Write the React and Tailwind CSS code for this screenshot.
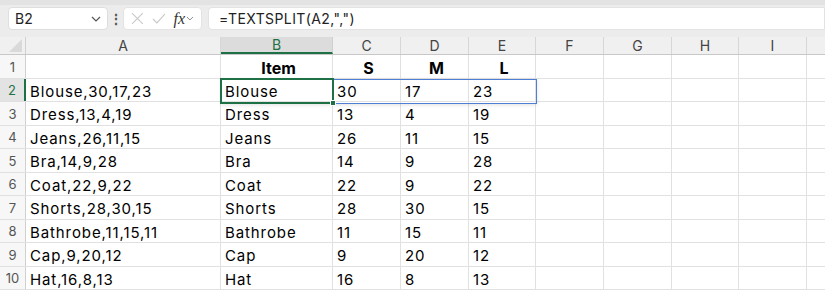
const cols = [
  { id: 'A', w: 'w-[195px]' },
  { id: 'B', w: 'w-[112px]' },
  { id: 'C', w: 'w-[68px]' },
  { id: 'D', w: 'w-[68px]' },
  { id: 'E', w: 'w-[67px]' },
  { id: 'F', w: 'w-[68px]' },
  { id: 'G', w: 'w-[68px]' },
  { id: 'H', w: 'w-[67px]' },
  { id: 'I', w: 'w-[68px]' },
  { id: '', w: 'w-[68px]' },
]

const raw = [
  ['Blouse', 30, 17, 23],
  ['Dress', 13, 4, 19],
  ['Jeans', 26, 11, 15],
  ['Bra', 14, 9, 28],
  ['Coat', 22, 9, 22],
  ['Shorts', 28, 30, 15],
  ['Bathrobe', 11, 15, 11],
  ['Cap', 9, 20, 12],
  ['Hat', 16, 8, 13],
]

const rows = [
  ['', 'Item', 'S', 'M', 'L'],
  ...raw.map((r) => [r.join(','), r[0], String(r[1]), String(r[2]), String(r[3])]),
]

function Cell({ col, value, header, ci }) {
  const align = header && ci > 0 ? 'justify-center font-bold text-[16px]' : 'justify-start text-[15px] tracking-[0.9px]'
  return (
    <div
      className={`${col.w} shrink-0 h-full flex items-center pt-[4px] pl-[4px] border-r border-[#e1e1e1] text-black ${align}`}
    >
      {value}
    </div>
  )
}

export default function App() {
  return (
    <div className="w-[825px] h-[292px] overflow-hidden bg-white font-['Inter',sans-serif]">
      {/* formula bar */}
      <div className="h-[37px] bg-[#ececec] flex items-start pt-[2px] border-t-[5px] border-[#e3e3e3]">
        <div className="ml-[8px] w-[100px] h-[23px] rounded-[4px] bg-white border border-[#dedede] flex items-center justify-between px-[6px]">
          <span className="text-[14px] text-[#222]">B2</span>
          <svg width="10" height="6" viewBox="0 0 10 6" fill="none" stroke="#555" strokeWidth="1.2">
            <path d="M1 1l4 4 4-4" />
          </svg>
        </div>
        <div className="w-[15px] h-[23px] flex items-center justify-center text-[#555] text-[14px] font-bold">⋮</div>
        <div className="w-[79px] h-[23px] rounded-[4px] bg-white border border-[#e3e3e3] flex items-center px-[7px] gap-[8px]">
          <svg width="13" height="13" viewBox="0 0 13 13" stroke="#c8c8c8" strokeWidth="1.1">
            <path d="M1 1l11 11M12 1L1 12" />
          </svg>
          <svg width="14" height="11" viewBox="0 0 14 11" fill="none" stroke="#c8c8c8" strokeWidth="1.1">
            <path d="M1 6l4 4 8-9" />
          </svg>
          <span className="font-['Liberation_Serif',serif] italic text-[16px] text-[#333] leading-none">fx</span>
          <svg width="8" height="5" viewBox="0 0 8 5" fill="none" stroke="#888" strokeWidth="1" className="-ml-[7px]">
            <path d="M1 1l3 3 3-3" />
          </svg>
        </div>
        <div className="ml-[6px] flex-1 h-[23px] bg-white border border-[#e3e3e3] rounded-l-[4px] flex items-center pl-[10px] text-[14px] text-[#222] tracking-[0.4px]">
          =TEXTSPLIT(A2,",")
        </div>
      </div>

      {/* column headers */}
      <div className="h-[18px] flex bg-[#f0f0f0] border-b border-[#c8c8c8]">
        <div className="w-[26px] shrink-0 h-full border-r border-[#d0d0d0] flex items-end justify-end pr-[3px] pb-[2px]">
          <div className="w-0 h-0 border-l-[13px] border-l-transparent border-b-[13px] border-b-[#d9d9d9]" />
        </div>
        {cols.map((c) =>
          c.id === 'B' ? (
            <div
              key={c.id}
              className={`${c.w} shrink-0 h-full flex items-center justify-center bg-[#dcdcdc] border-b-2 border-[#1e7145] border-r border-r-[#d0d0d0] text-[14px] text-[#1e7145]`}
            >
              {c.id}
            </div>
          ) : (
            <div
              key={c.id || 'J'}
              className={`${c.w} shrink-0 h-full flex items-center justify-center border-r border-[#d7d7d7] text-[14px] text-[#444]`}
            >
              {c.id}
            </div>
          ),
        )}
      </div>

      {/* grid */}
      <div className="relative">
        {rows.map((r, ri) => (
          <div key={ri} className="h-[23.5px] flex border-b border-[#e1e1e1]">
            <div
              className={`w-[26px] shrink-0 h-full flex items-center justify-center pt-[2px] text-[13px] ${
                ri === 1
                  ? 'bg-[#e3e3e3] text-[#1e7145] border-r-2 border-[#1e7145]'
                  : 'bg-[#f7f7f7] text-[#555] border-r border-[#d0d0d0]'
              }`}
            >
              {ri + 1}
            </div>
            {cols.map((c, ci) => (
              <Cell key={c.id || 'J'} col={c} ci={ci} value={r[ci] || ''} header={ri === 0} />
            ))}
          </div>
        ))}

        {/* spill range border */}
        <div className="absolute left-[221px] top-[23.5px] w-[316px] h-[25px] border border-[#4f7fd4] shadow-[0_1px_4px_rgba(0,0,0,0.12)] pointer-events-none" />
        {/* active cell */}
        <div className="absolute left-[220px] top-[22.5px] w-[114px] h-[26px] border-2 border-[#1e7145] pointer-events-none">
          <div className="absolute -right-[4px] -bottom-[4px] w-[6px] h-[6px] bg-[#1e7145] border border-white" />
        </div>
      </div>
    </div>
  )
}
